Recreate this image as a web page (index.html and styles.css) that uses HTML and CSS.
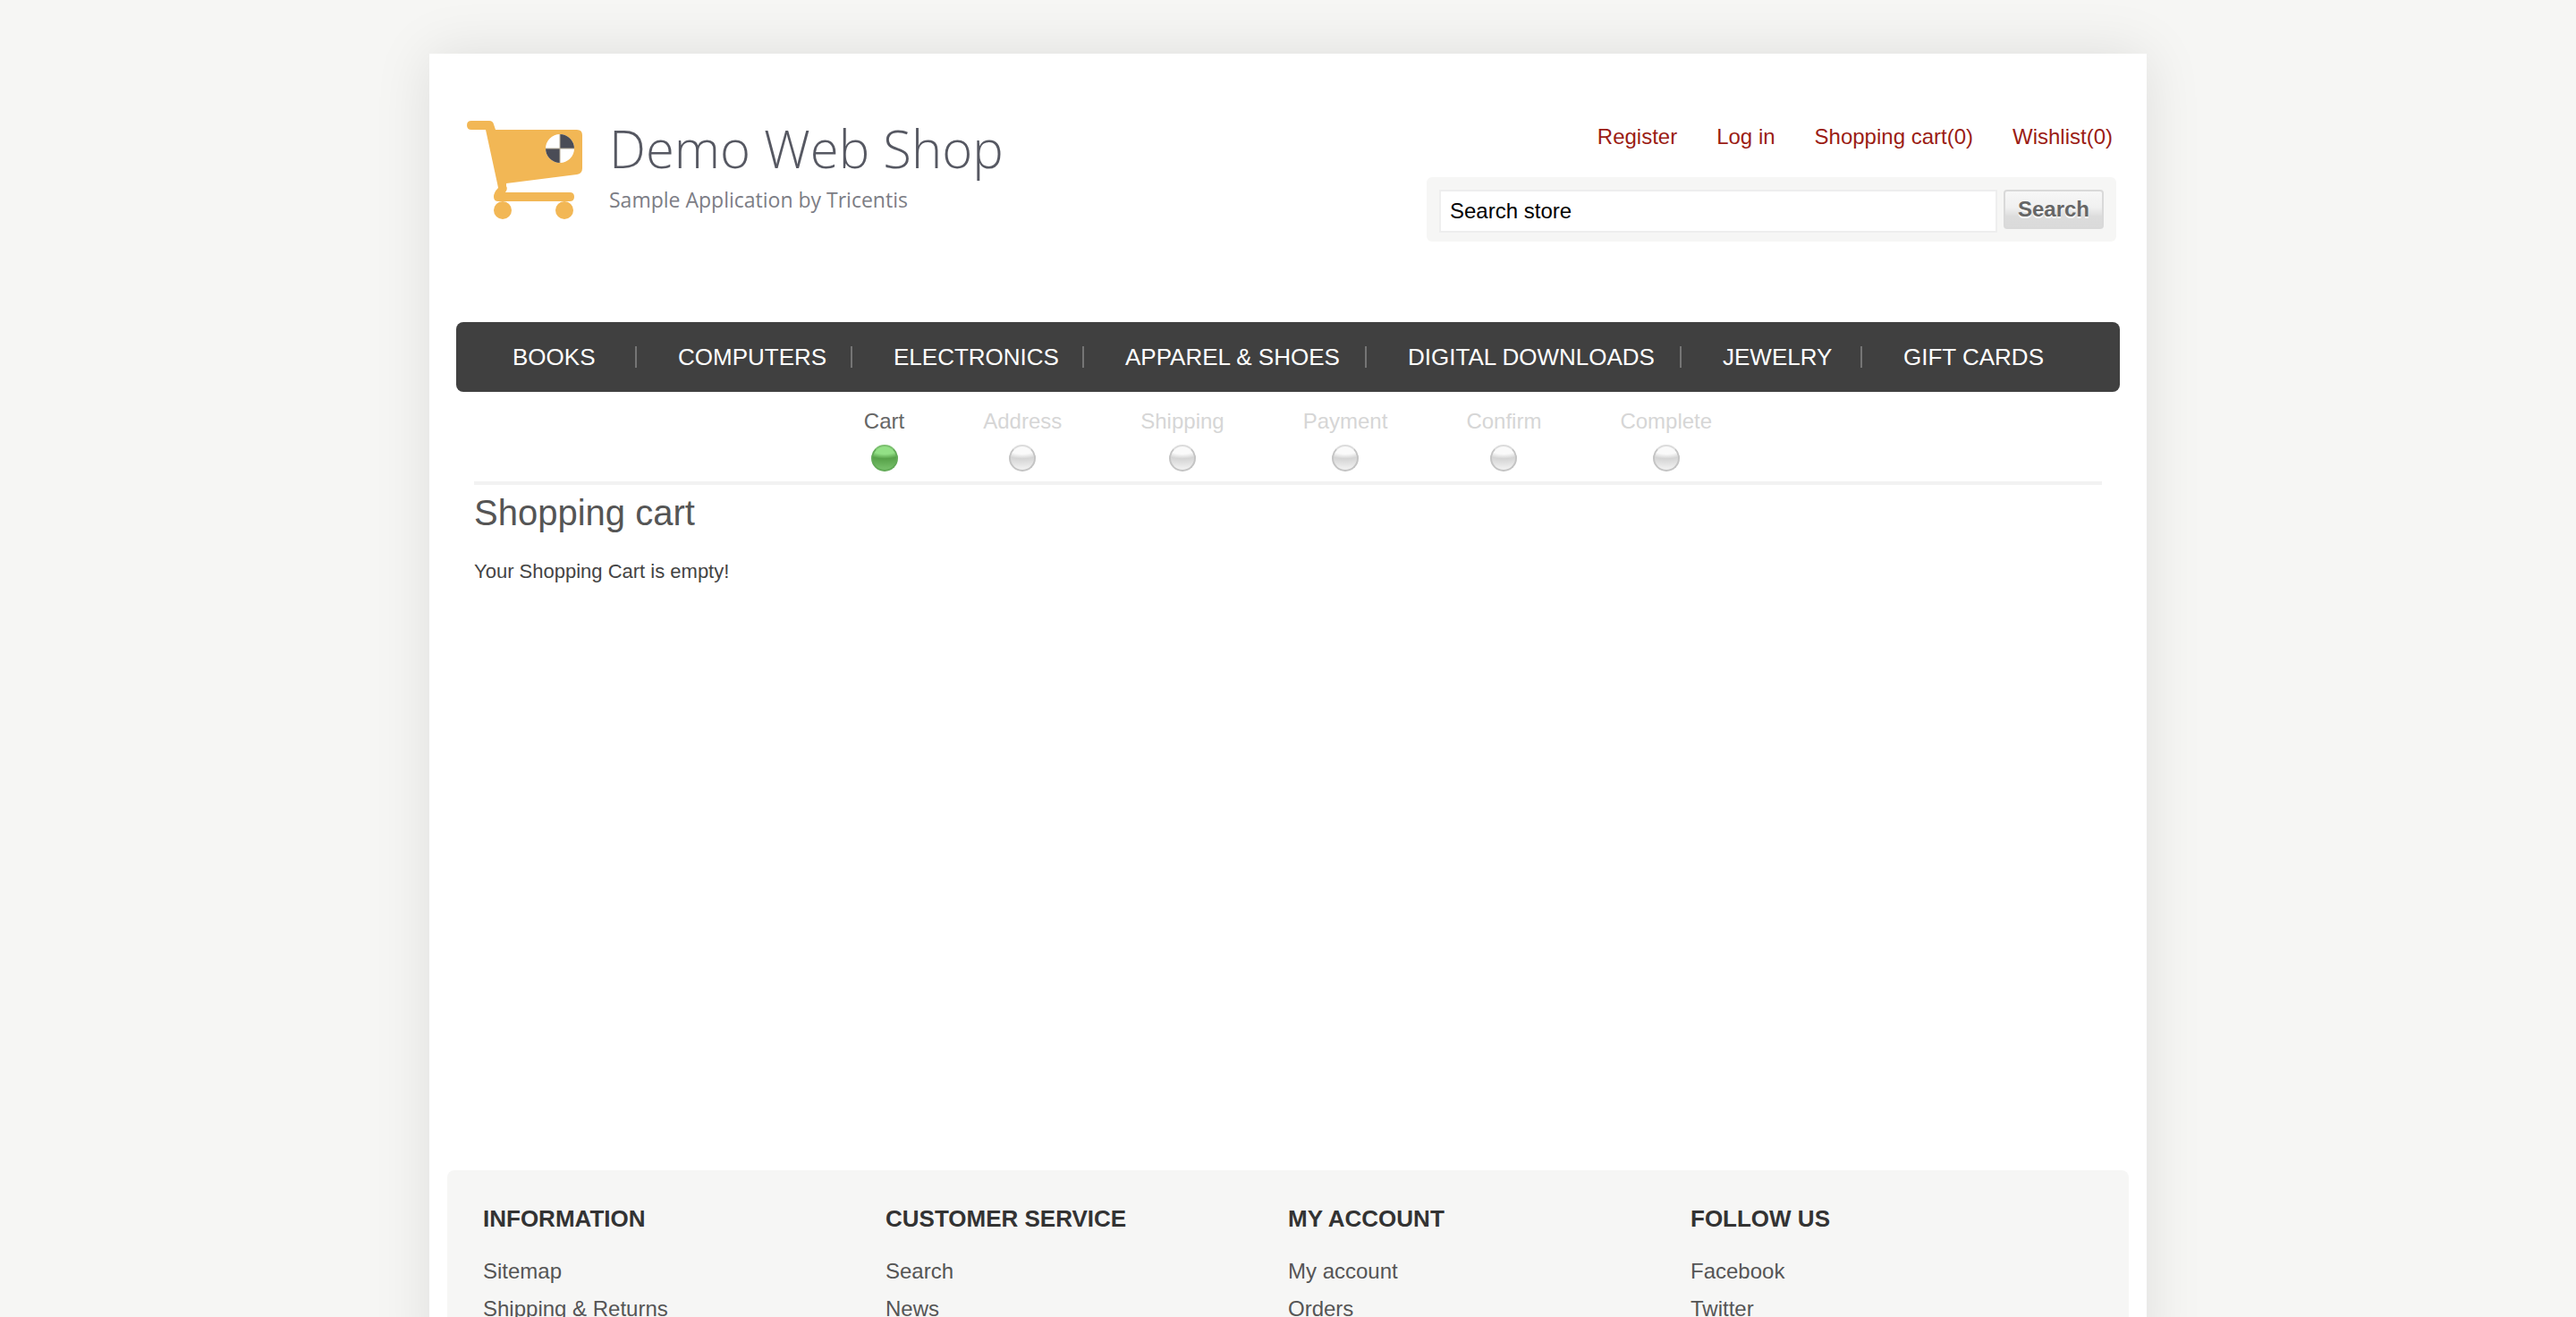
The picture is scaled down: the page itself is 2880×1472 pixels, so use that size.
FILE: index.html
```html
<!DOCTYPE html>
<html lang="en">
<head>
<meta charset="utf-8">
<title>Demo Web Shop. Shopping Cart</title>
<link rel="stylesheet" href="styles.css">
</head>
<body>
<div class="page">
  <div class="wrapper">
    <header class="header">
      <a class="logo" href="#">
        <svg class="logo-cart" viewBox="0 0 132 112" aria-hidden="true">
          <path fill="#f2b755" d="M5 0H25Q29 0 30 4L32 10H123Q129 10 129 16V53Q129 59 123 60L44 70V73Q46 76 43 80H115Q120 80 120 85Q120 90 115 90H35Q30 90 30 85Q30 80 35 75L34 70L21 10H5Q0 10 0 5Q0 0 5 0Z"/>
          <circle cx="40" cy="100" r="10" fill="#f2b755"/>
          <circle cx="109" cy="100" r="10" fill="#f2b755"/>
          <circle cx="104" cy="31" r="16" fill="#fff"/>
          <path fill="#4a4c56" d="M104 31V15A16 16 0 0 1 120 31ZM104 31V47A16 16 0 0 1 88 31Z"/>
          <path stroke="#b3aa98" stroke-width="1" d="M104 15V47M88 31H120"/>
        </svg>
        <span class="logo-text">
          <span class="logo-name">Demo Web Shop</span>
          <span class="logo-tagline">Sample Application by Tricentis</span>
        </span>
      </a>
      <div class="header-side">
        <nav class="account-links" aria-label="Account">
          <a href="#">Register</a>
          <a href="#">Log in</a>
          <a href="#">Shopping cart(0)</a>
          <a href="#">Wishlist(0)</a>
        </nav>
        <form class="search">
          <input class="search-input" type="text" value="Search store" aria-label="Search store">
          <button class="search-button" type="button">Search</button>
        </form>
      </div>
    </header>

    <nav class="menu" aria-label="Categories">
      <a href="#">BOOKS</a>
      <a href="#">COMPUTERS</a>
      <a href="#">ELECTRONICS</a>
      <a href="#">APPAREL &amp; SHOES</a>
      <a href="#">DIGITAL DOWNLOADS</a>
      <a href="#">JEWELRY</a>
      <a href="#">GIFT CARDS</a>
    </nav>

    <main class="main">
      <ol class="steps">
        <li class="step step-active"><a href="#">Cart</a><span class="dot"></span></li>
        <li class="step">Address<span class="dot"></span></li>
        <li class="step">Shipping<span class="dot"></span></li>
        <li class="step">Payment<span class="dot"></span></li>
        <li class="step">Confirm<span class="dot"></span></li>
        <li class="step">Complete<span class="dot"></span></li>
      </ol>
      <h1 class="title">Shopping cart</h1>
      <p class="message">Your Shopping Cart is empty!</p>
    </main>

    <footer class="footer">
      <section>
        <h2>INFORMATION</h2>
        <ul>
          <li><a href="#">Sitemap</a></li>
          <li><a href="#">Shipping &amp; Returns</a></li>
        </ul>
      </section>
      <section>
        <h2>CUSTOMER SERVICE</h2>
        <ul>
          <li><a href="#">Search</a></li>
          <li><a href="#">News</a></li>
        </ul>
      </section>
      <section>
        <h2>MY ACCOUNT</h2>
        <ul>
          <li><a href="#">My account</a></li>
          <li><a href="#">Orders</a></li>
        </ul>
      </section>
      <section>
        <h2>FOLLOW US</h2>
        <ul>
          <li><a href="#">Facebook</a></li>
          <li><a href="#">Twitter</a></li>
        </ul>
      </section>
    </footer>
  </div>
</div>
</body>
</html>
```
FILE: styles.css
```css
* {
  box-sizing: border-box;
}

body {
  margin: 0;
  background: #f6f6f4;
  color: #555;
  font-family: "Liberation Sans", Arial, sans-serif;
  font-size: 24px;
  line-height: 28px;
}

a {
  color: inherit;
  text-decoration: none;
}

ul,
ol {
  margin: 0;
  padding: 0;
  list-style: none;
}

.page {
  height: 100vh;
  overflow: hidden;
  padding-top: 60px;
}

.wrapper {
  max-width: 1920px;
  margin: 0 auto;
  padding: 0 20px;
  background: #fff;
  box-shadow: 0 0 60px rgba(0, 0, 0, 0.1);
}

/* Header */

.header {
  display: flex;
  justify-content: space-between;
  align-items: flex-start;
  height: 300px;
  padding: 75px 14px 0 22px;
}

.logo {
  display: flex;
  gap: 27px;
}

.logo-cart {
  width: 132px;
  height: 112px;
}

.logo-text {
  display: flex;
  flex-direction: column;
  font-family: "Open Sans", sans-serif;
}

.logo-name {
  color: #565862;
  font-size: 58px;
  font-weight: 300;
  line-height: 62px;
}

.logo-tagline {
  color: #7c7d85;
  font-size: 23px;
  line-height: 52px;
}

.header-side {
  width: 771px;
  padding-top: 4px;
}

.account-links {
  display: flex;
  justify-content: flex-end;
  gap: 44px;
  padding-right: 4px;
  color: #9b1c14;
}

.search {
  display: flex;
  align-items: flex-start;
  gap: 7px;
  margin-top: 31px;
  padding: 14px 14px 10px;
  border-radius: 6px;
  background: #f6f6f5;
}

.search-input {
  flex: 1;
  min-width: 0;
  height: 48px;
  padding: 0 10px;
  border: 2px solid #eee;
  background: #fff;
  color: #000;
  font: inherit;
}

.search-button {
  width: 112px;
  height: 44px;
  padding: 0;
  border: 2px solid #d9d9d9;
  border-radius: 4px;
  background: linear-gradient(#f7f7f7 0%, #f0f0f0 45%, #dcdcdc 70%, #dadada 100%);
  color: #666;
  font: inherit;
  font-weight: 700;
  text-shadow: 0 2px 0 #fff;
}

/* Category menu */

.menu {
  display: grid;
  grid-template-columns: 202px 241px 259px 316px 352px 202px 1fr;
  margin: 0 10px;
  padding: 27px 0;
  border-radius: 8px;
  background: #404040;
  color: #fff;
  font-size: 26px;
  line-height: 24px;
}

.menu a {
  padding-left: 46px;
  border-right: 2px solid #757575;
}

.menu a:first-child {
  padding-left: 63px;
}

.menu a:last-child {
  border-right: 0;
}

/* Checkout progress and cart */

.main {
  min-height: 870px;
  padding: 19px 30px 0;
}

.steps {
  display: flex;
  justify-content: center;
  gap: 88px;
  padding-bottom: 11px;
  border-bottom: 4px solid #f2f2f2;
  color: #d6d6d6;
}

.step {
  display: flex;
  flex-direction: column;
  align-items: center;
  gap: 12px;
}

.step-active {
  color: #666;
}

.dot {
  width: 30px;
  height: 30px;
  border: 2px solid #c4c4c4;
  border-top-color: #dcdcdc;
  border-radius: 50%;
  background: radial-gradient(ellipse 26px 13px at 50% 0, #fafafa 65%, #d4d4d4 105%, #eee 185%);
}

.step-active .dot {
  border-color: #62aa57;
  border-top-color: #7cc070;
  background: radial-gradient(ellipse 26px 13px at 50% 0, #93e086 65%, #57a149 105%, #73bd66 185%);
}

.title {
  margin: 0;
  padding-top: 7px;
  font-size: 40px;
  font-weight: 400;
  line-height: 48px;
}

.message {
  margin: 28px 0 0;
  color: #444;
  font-size: 22px;
}

/* Footer */

.footer {
  display: grid;
  grid-template-columns: repeat(4, 450px);
  padding: 38px 40px;
  border-radius: 8px;
  background: #f6f6f5;
}

.footer h2 {
  margin: 0 0 29px;
  color: #333;
  font-size: 26px;
  line-height: 32px;
}

.footer li {
  padding-bottom: 14px;
}
```
